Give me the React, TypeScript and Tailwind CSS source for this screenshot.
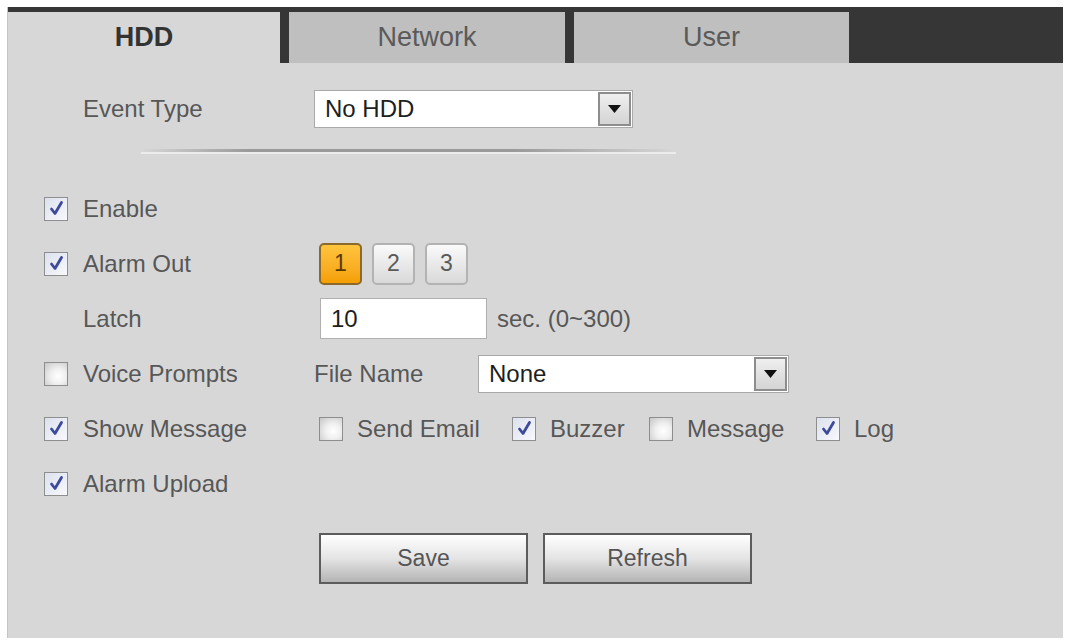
import React from "react";

const FONT = { fontFamily: '"Liberation Sans", Arial, sans-serif' };

function Check({ on }: { on: boolean }) {
  return (
    <span
      className={
        "flex h-[24px] w-[24px] shrink-0 items-center justify-center border border-[#8e8e8e] " +
        (on
          ? "bg-gradient-to-br from-[#dce1ee] to-[#f8f9fc]"
          : "bg-[radial-gradient(circle_at_60%_60%,#ffffff_0%,#f0f0f0_40%,#c6c6c6_100%)]")
      }
    >
      {on && (
        <svg width="17" height="17" viewBox="0 0 17 17">
          <path
            d="M3.5 9 L7 13.5 L13.5 2.5"
            fill="none"
            stroke="#3d4a9c"
            strokeWidth="2.8"
            strokeLinecap="round"
            strokeLinejoin="round"
          />
        </svg>
      )}
    </span>
  );
}

function Select({ value, width }: { value: string; width: string }) {
  return (
    <div className={"flex h-[38px] items-stretch border border-[#a9a9a9] bg-white " + width}>
      <div className="flex flex-1 items-center pl-[10px] text-[24px] text-[#1e1e1e]">{value}</div>
      <div className="m-[1px] flex w-[33px] items-center justify-center border-2 border-[#8d8d8d] bg-gradient-to-b from-[#efefef] to-[#d4d4d4]">
        <svg width="13" height="8" viewBox="0 0 13 8">
          <path d="M0 0 H13 L6.5 8 Z" fill="#111" />
        </svg>
      </div>
    </div>
  );
}

function AlarmBtn({ n, active }: { n: number; active?: boolean }) {
  return (
    <div
      className={
        "flex h-[42px] w-[43px] items-center justify-center rounded-[5px] border-2 text-[23px] " +
        (active
          ? "border-[#8b6a2c] bg-gradient-to-b from-[#ffc43d] to-[#f5a000] text-[#5b3a00]"
          : "border-[#b3b3b3] bg-gradient-to-b from-[#fafafa] to-[#d9d9d9] text-[#5a5a5a]")
      }
    >
      {n}
    </div>
  );
}

function Row({ children }: { children: React.ReactNode }) {
  return <div className="flex h-[55px] items-center">{children}</div>;
}

function Left({ check, label }: { check?: boolean; label: string }) {
  return (
    <div className="flex w-[270px] shrink-0 items-center">
      <div className="flex w-[39px] shrink-0">{check !== undefined && <Check on={check} />}</div>
      <span className="text-[24px] text-[#575757]">{label}</span>
    </div>
  );
}

function Opt({ on, label, width }: { on: boolean; label: string; width: string }) {
  return (
    <div className={"flex shrink-0 items-center gap-[14px] " + width}>
      <Check on={on} />
      <span className="text-[24px] text-[#575757]">{label}</span>
    </div>
  );
}

function PushButton({ label }: { label: string }) {
  return (
    <button className="h-[51px] w-[209px] border-2 border-[#5c5c5c] bg-gradient-to-b from-[#ffffff] via-[#e4e4e4] to-[#b4b4b4] text-[23px] text-[#555]">
      {label}
    </button>
  );
}

export default function App() {
  return (
    <div className="h-[640px] w-[1068px] bg-white pl-[7px] pt-[7px]" style={FONT}>
      <div className="flex h-[631px] w-[1056px] flex-col border-l border-[#c4c4c4] bg-[#d7d7d7]">
        {/* tab strip */}
        <div className="flex h-[56px] gap-[9px] bg-[#363636] pt-[5px]">
          <div className="flex w-[272px] items-center justify-center bg-[#d7d7d7] text-[27px] font-bold text-[#333]">
            HDD
          </div>
          <div className="flex w-[276px] items-center justify-center bg-[#bfbfbf] text-[27px] text-[#5a5a5a]">
            Network
          </div>
          <div className="flex w-[275px] items-center justify-center bg-[#bfbfbf] text-[27px] text-[#5a5a5a]">
            User
          </div>
        </div>

        <div className="flex flex-col pl-[36px]">
          {/* event type */}
          <div className="mt-[27px] flex h-[38px] items-center">
            <div className="flex w-[270px] shrink-0 pl-[39px] text-[24px] text-[#575757]">Event Type</div>
            <Select value="No HDD" width="w-[319px]" />
          </div>

          <div className="ml-[97px] mt-[21px] h-[3px] w-[535px] bg-[linear-gradient(90deg,rgba(150,150,150,0)_0%,#9a9a9a_20%,#9a9a9a_70%,rgba(150,150,150,0)_100%)] shadow-[0_2px_0_rgba(245,245,245,0.7)]" />

          <div className="mt-[29px] flex flex-col">
            <Row>
              <Left check={true} label="Enable" />
            </Row>
            <Row>
              <Left check={true} label="Alarm Out" />
              <div className="ml-[5px] flex gap-[10px]">
                <AlarmBtn n={1} active />
                <AlarmBtn n={2} />
                <AlarmBtn n={3} />
              </div>
            </Row>
            <Row>
              <Left label="Latch" />
              <div className="ml-[6px] flex h-[41px] w-[167px] items-center border border-[#b0b0b0] bg-white pl-[10px] text-[24px] text-[#1e1e1e]">
                10
              </div>
              <span className="ml-[10px] text-[24px] text-[#575757]">sec. (0~300)</span>
            </Row>
            <Row>
              <Left check={false} label="Voice Prompts" />
              <span className="w-[164px] shrink-0 text-[24px] text-[#575757]">File Name</span>
              <Select value="None" width="w-[311px]" />
            </Row>
            <Row>
              <Left check={true} label="Show Message" />
              <div className="ml-[5px] flex items-center">
                <Opt on={false} label="Send Email" width="w-[193px]" />
                <Opt on={true} label="Buzzer" width="w-[137px]" />
                <Opt on={false} label="Message" width="w-[167px]" />
                <Opt on={true} label="Log" width="w-[100px]" />
              </div>
            </Row>
            <Row>
              <Left check={true} label="Alarm Upload" />
            </Row>
          </div>

          <div className="ml-[275px] mt-[22px] flex gap-[15px]">
            <PushButton label="Save" />
            <PushButton label="Refresh" />
          </div>
        </div>
      </div>
    </div>
  );
}
